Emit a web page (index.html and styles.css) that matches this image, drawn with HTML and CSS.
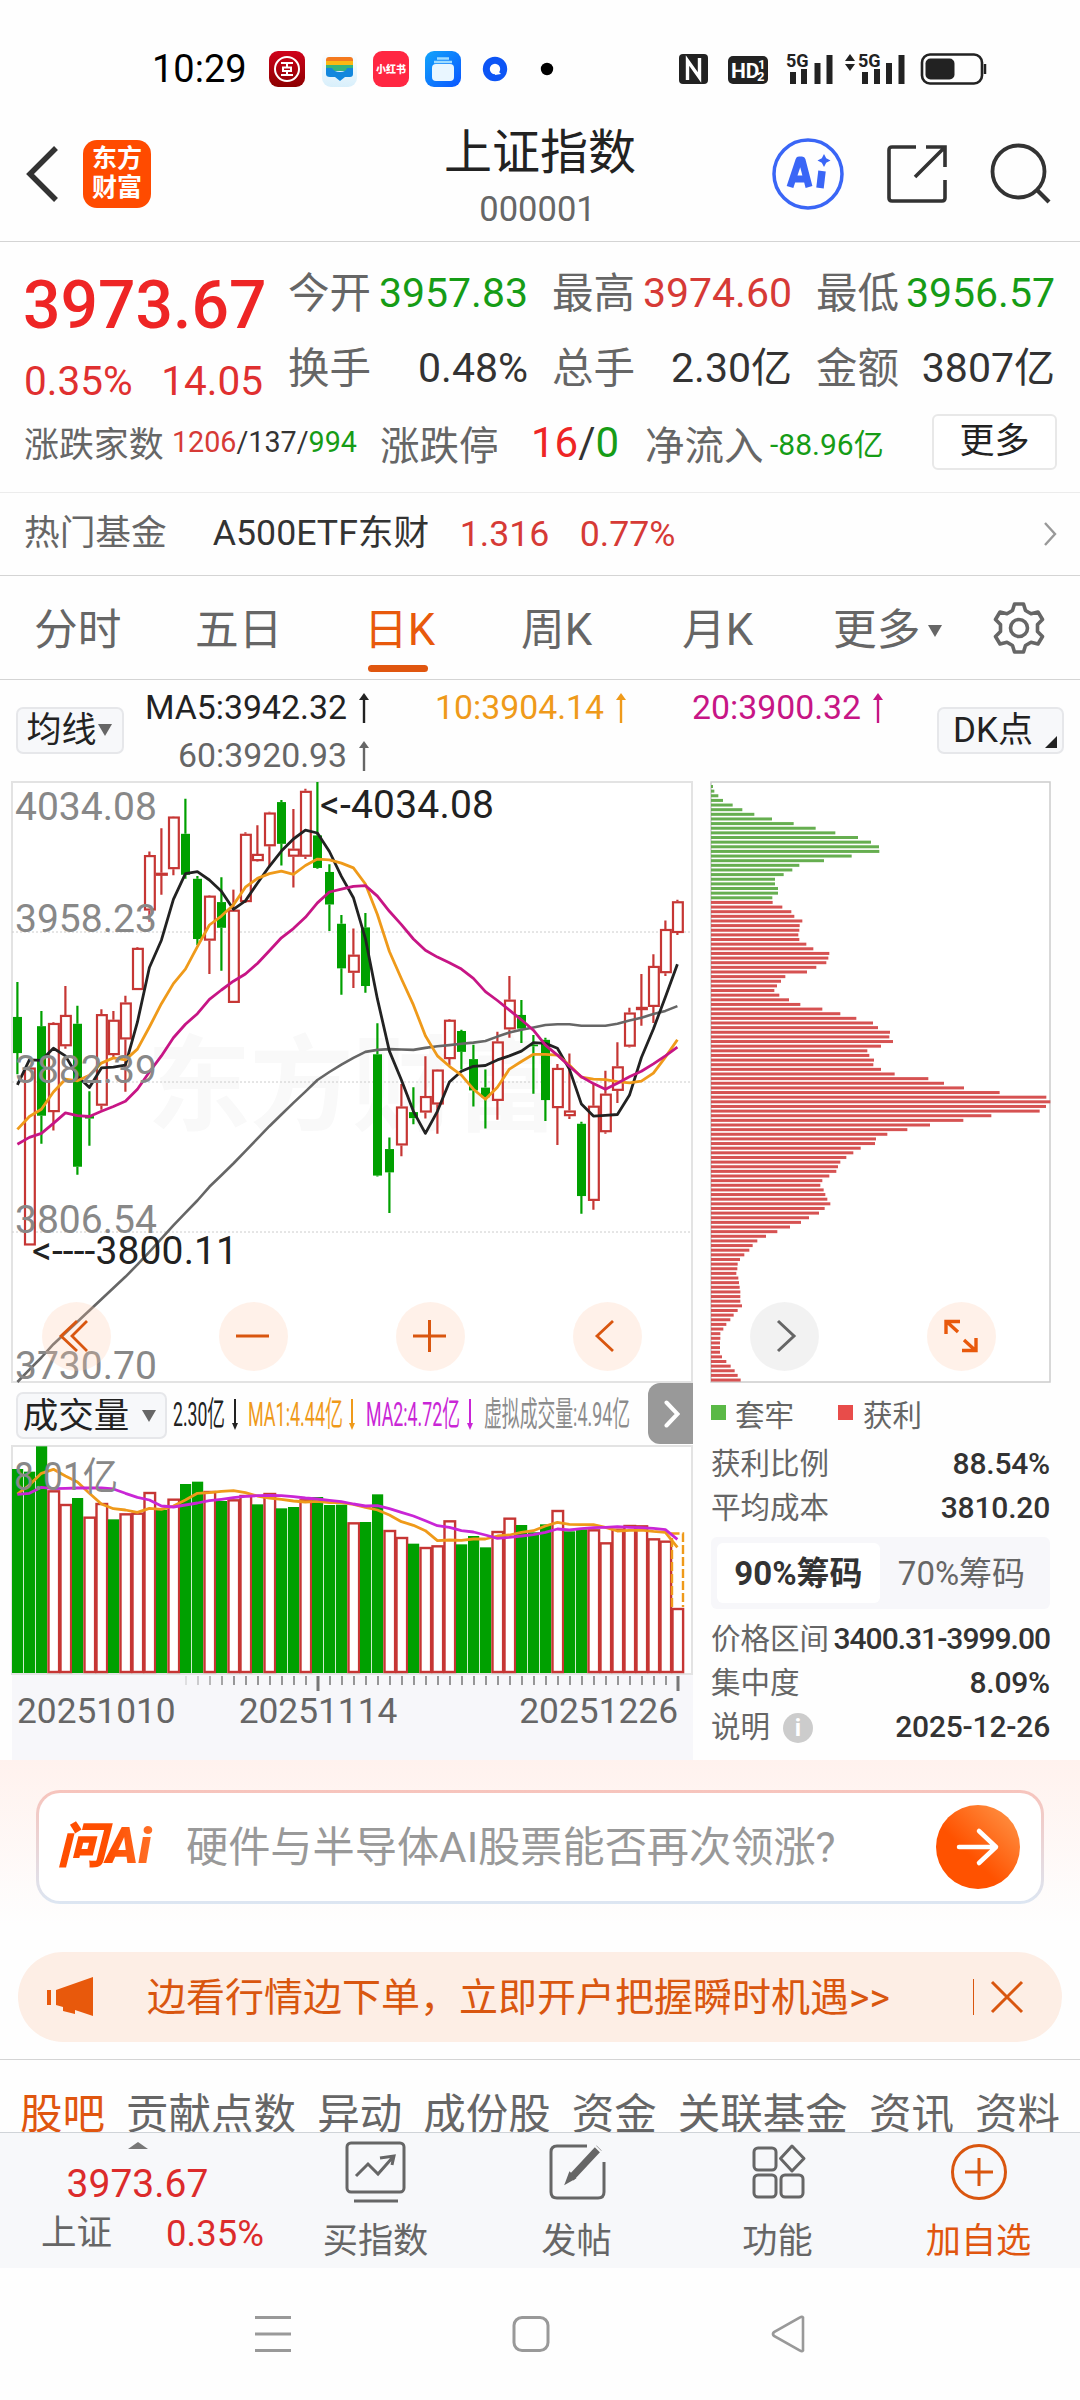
FILE: index.html
```html
<!DOCTYPE html>
<html lang="zh-CN">
<head>
    <meta charset="UTF-8">
    <meta name="viewport" content="width=device-width, initial-scale=1.0">
    <title>上证指数 000001</title>
    <link rel="stylesheet" href="styles.css">
</head>
<body>

    <div class="status-bar">
        <span class="clock">10:29</span>
        <svg class="status-apps" width="290" height="36" viewBox="0 0 290 36">
            <defs>
                <linearGradient id="bankBg" x1="0" y1="0" x2="0" y2="1"><stop offset="0" stop-color="#d0021b"/><stop offset="1" stop-color="#8c0000"/></linearGradient>
                <linearGradient id="fileBg" x1="0" y1="0" x2="1" y2="1"><stop offset="0" stop-color="#12a5fb"/><stop offset="1" stop-color="#0a55ff"/></linearGradient>
                <linearGradient id="walletBg" x1="0" y1="0" x2="0" y2="1"><stop offset="0" stop-color="#fff"/><stop offset="1" stop-color="#d8effb"/></linearGradient>
            </defs>
            <rect width="36" height="36" rx="9" fill="url(#bankBg)"/>
            <circle cx="18" cy="18" r="12" fill="none" stroke="#fff" stroke-width="2"/>
            <path d="M12 12h12M12 24h12M14 16.500h8v3.500h-8zM18 12v4M18 20v4" fill="none" stroke="#fff" stroke-width="2"/>
            <rect x="53" y="0" width="35" height="36" rx="9" fill="url(#walletBg)"/>
            <rect x="57" y="6" width="27" height="12" rx="3" fill="#f47a1f"/>
            <rect x="57" y="10" width="27" height="8" fill="#fcb813"/>
            <rect x="57" y="14" width="27" height="6" fill="#35b37e"/>
            <path d="M57 17h6q2 4 8 4t7-4h6v6q0 3-3 3h-5l-5 4-5-4h-5q-4 0-4-3z" fill="#1287dd"/>
            <rect x="104" width="36" height="36" rx="9" fill="#ff2742"/>
            <text class="xhs" x="122" y="22" text-anchor="middle">小红书</text>
            <rect x="156" width="36" height="36" rx="9" fill="url(#fileBg)"/>
            <rect x="163" y="13" width="22" height="17" rx="4" fill="#e9f6ff"/>
            <path d="M165 11h18M168 7.500h12" stroke="#9fdcff" stroke-width="2.500"/>
            <circle cx="226" cy="18" r="8.700" fill="none" stroke="#0d55f5" stroke-width="7"/>
            <path d="M227 18l5 5-6 1z" fill="#fff"/>
            <circle cx="278" cy="18" r="6.200"/>
        </svg>
        <svg class="status-signal" width="312" height="36" viewBox="0 0 312 36">
            <rect x="1" y="3" width="29" height="30" rx="4" fill="#222"/>
            <path d="M9.500 29V9.500L21.500 26.500V7" fill="none" stroke="#fff" stroke-width="3.400"/>
            <rect x="50" y="5" width="40" height="28" rx="5" fill="#222"/>
            <text class="hd" x="53" y="27">HD</text>
            <text class="hd-small" x="80" y="18">1</text>
            <text class="hd-small" x="79" y="30">2</text>
            <text class="net" x="108" y="16">5G</text>
            <path d="M115 21v12M126 18v15M139.500 12v21M151.500 4v29" stroke="#222" stroke-width="6"/>
            <path d="M167 10l5-7 5 7zM167 13l5 7 5-7z" fill="#222"/>
            <text class="net" x="180" y="16">5G</text>
            <path d="M187 21v12M199 18v15M211 12v21M223.500 4v29" stroke="#222" stroke-width="6"/>
            <rect x="244" y="3.500" width="60" height="29" rx="8" fill="none" stroke="#222" stroke-width="2.600"/>
            <rect x="247.500" y="7.500" width="29" height="21" rx="5" fill="#222"/>
            <path d="M307 13v10" stroke="#222" stroke-width="2.500"/>
        </svg>
    </div>

    <header class="top-bar">
        <svg class="back" width="40" height="60" viewBox="0 0 40 60"><path d="M34 4L8 30l26 26" fill="none" stroke="#333" stroke-width="5.500"/></svg>
        <div class="logo">东方<br>财富</div>
        <div class="title">
            <h1>上证指数</h1>
            <span>000001</span>
        </div>
        <svg class="ai" width="72" height="72" viewBox="0 0 72 72">
            <circle cx="36" cy="36" r="34" fill="none" stroke="#3a66f6" stroke-width="3.500"/>
            <path d="M18 49L27 22h3l7 27M22 41h12" fill="none" stroke="#3a66f6" stroke-width="7" stroke-linejoin="round"/>
            <path d="M50 33l-2 17" stroke="#3a66f6" stroke-width="7.500"/>
            <path d="M52 16l2.200 4.300 4.300 2.200-4.300 2.200L52 29l-2.200-4.300-4.300-2.200 4.300-2.200z" fill="#3a66f6"/>
        </svg>
        <svg class="share" width="60" height="60" viewBox="0 0 60 60"><path d="M29 3H5q-3 0-3 3v48q0 3 3 3h50q3 0 3-3V36M39 3h19v20M58 3L28 33" fill="none" stroke="#333" stroke-width="3.600"/></svg>
        <svg class="search" width="62" height="62" viewBox="0 0 62 62"><circle cx="28.500" cy="28.500" r="26" fill="none" stroke="#333" stroke-width="3.800"/><path d="M47 47l12 12" stroke="#333" stroke-width="4.200"/></svg>
    </header>

    <section class="quote">
        <div class="quote-main">
            <div class="price">
                <strong>3973.67</strong>
                <p><span>0.35%</span><span>14.05</span></p>
            </div>
            <div class="stats">
                <div><label>今开</label><b class="green">3957.83</b></div>
                <div><label>最高</label><b class="red">3974.60</b></div>
                <div><label>最低</label><b class="green">3956.57</b></div>
                <div><label>换手</label><b>0.48%</b></div>
                <div><label>总手</label><b>2.30亿</b></div>
                <div><label>金额</label><b>3807亿</b></div>
            </div>
        </div>
        <div class="quote-extra">
            <label class="updown">涨跌家数</label>
            <span class="small updown-value"><i class="red">1206</i>/137/<i class="green">994</i></span>
            <label class="limit">涨跌停</label>
            <span class="limit-value"><i class="bright">16</i>/<i class="green">0</i></span>
            <label class="inflow">净流入</label>
            <span class="small green">-88.96亿</span>
            <button class="more-btn">更多</button>
        </div>
    </section>

    <section class="fund">
        <label>热门基金</label>
        <span class="fund-name">A500ETF东财</span>
        <span class="red fund-price">1.316</span>
        <span class="red">0.77%</span>
        <svg width="14" height="26" viewBox="0 0 14 26"><path d="M2 2l10 11L2 24" fill="none" stroke="#999" stroke-width="2.400"/></svg>
    </section>

    <nav class="periods">
        <a>分时</a>
        <a>五日</a>
        <a class="active">日K</a>
        <a>周K</a>
        <a>月K</a>
        <a>更多<i class="caret"></i></a>
        <svg width="54" height="54" viewBox="0 0 54 54">
            <path d="M22.500 3h9l2 6.500 5.500 3.200 7-1.700 4.500 7.500-5 5v7l5 5-4.500 7.500-7-1.700-5.500 3.200-2 6.500h-9l-2-6.500-5.500-3.200-7 1.700-4.500-7.500 5-5v-7l-5-5L8 11l7 1.700 5.500-3.200z" fill="none" stroke="#666" stroke-width="3.600" stroke-linejoin="round"/>
            <circle cx="27" cy="27" r="8.500" fill="none" stroke="#666" stroke-width="3.600"/>
        </svg>
    </nav>

    <section class="averages">
        <button class="pill">均线<i class="caret"></i></button>
        <div class="ma-list">
            <span class="ma5">MA5:3942.32<svg class="up" width="12" height="30" viewBox="0 0 12 30"><path d="M6 4v26" stroke="currentColor" stroke-width="2.400"/><path d="M1 7l5-7 5 7z" fill="currentColor"/></svg></span>
            <span class="ma10">10:3904.14<svg class="up" width="12" height="30" viewBox="0 0 12 30"><path d="M6 4v26" stroke="currentColor" stroke-width="2.400"/><path d="M1 7l5-7 5 7z" fill="currentColor"/></svg></span>
            <span class="ma20">20:3900.32<svg class="up" width="12" height="30" viewBox="0 0 12 30"><path d="M6 4v26" stroke="currentColor" stroke-width="2.400"/><path d="M1 7l5-7 5 7z" fill="currentColor"/></svg></span>
            <span class="ma60">60:3920.93<svg class="up" width="12" height="30" viewBox="0 0 12 30"><path d="M6 4v26" stroke="currentColor" stroke-width="2.400"/><path d="M1 7l5-7 5 7z" fill="currentColor"/></svg></span>
        </div>
        <button class="pill dk">DK点<i class="corner"></i></button>
    </section>

    <main class="charts">
        <div class="left-col">
            <svg id="kline" width="682" height="602" viewBox="0 0 682 602"></svg>

            <div class="volume-head">
                <button class="pill volume-pill">成交量<i class="caret"></i></button>
                <svg class="volume-legend" width="460" height="60" viewBox="0 0 460 60">
                    <text x="0" y="43" textLength="52" lengthAdjust="spacingAndGlyphs" fill="#222">2.30亿</text>
                    <text x="75" y="43" textLength="95" lengthAdjust="spacingAndGlyphs" fill="#ef9a1a">MA1:4.44亿</text>
                    <text x="193" y="43" textLength="94" lengthAdjust="spacingAndGlyphs" fill="#c926d6">MA2:4.72亿</text>
                    <text x="311" y="43" textLength="146" lengthAdjust="spacingAndGlyphs" fill="#8c8c8c">虚拟成交量:4.94亿</text>
                    <path d="M62 16v26" stroke="#222" stroke-width="2"/><path d="M59 40h6l-3 7z" fill="#222"/>
                    <path d="M179 16v26" stroke="#ef9a1a" stroke-width="2"/><path d="M176 40h6l-3 7z" fill="#ef9a1a"/>
                    <path d="M297 16v26" stroke="#c926d6" stroke-width="2"/><path d="M294 40h6l-3 7z" fill="#c926d6"/>
                </svg>
                <div class="next"><svg width="16" height="28" viewBox="0 0 16 28"><path d="M2.500 2.500l11 11.500-11 11.500" fill="none" stroke="#fff" stroke-width="4" stroke-linecap="round"/></svg></div>
            </div>

            <svg id="volume" width="682" height="230" viewBox="0 0 682 230"></svg>

            <div class="dates">
                <svg id="ticks" width="680" height="18" viewBox="0 0 680 18"></svg>
                <div class="date-row"><span>20251010</span><span>20251114</span><span>20251226</span></div>
            </div>
        </div>

        <div class="right-col">
            <svg id="chips" width="341" height="602" viewBox="0 0 341 602"></svg>
            <div class="chip-legend"><i class="sq sq-green"></i>套牢<i class="sq sq-red"></i>获利</div>
            <div class="row"><label>获利比例</label><b>88.54%</b></div>
            <div class="row"><label>平均成本</label><b>3810.20</b></div>
            <div class="switch"><span class="on">90%筹码</span><span>70%筹码</span></div>
            <div class="row"><label>价格区间</label><b class="range">3400.31-3999.00</b></div>
            <div class="row"><label>集中度</label><b>8.09%</b></div>
            <div class="row"><label>说明<i class="info">i</i></label><b>2025-12-26</b></div>
        </div>

        <div class="tools">
            <span><svg width="44" height="44" viewBox="0 0 44 44"><path d="M23 7L7 22l16 15M33 7L18 22l15 15" fill="none" stroke="#d9560f" stroke-width="2.800"/></svg></span>
            <span><svg width="44" height="44" viewBox="0 0 44 44"><path d="M5 22h33" stroke="#d9560f" stroke-width="3"/></svg></span>
            <span><svg width="44" height="44" viewBox="0 0 44 44"><path d="M5 22h33M21.500 6v32" stroke="#d9560f" stroke-width="3"/></svg></span>
            <span><svg width="44" height="44" viewBox="0 0 44 44"><path d="M28 7L12 22l16 15" fill="none" stroke="#d9560f" stroke-width="2.800"/></svg></span>
            <span class="gray"><svg width="44" height="44" viewBox="0 0 44 44"><path d="M16 7l16 15-16 15" fill="none" stroke="#666" stroke-width="3"/></svg></span>
            <span><svg width="44" height="44" viewBox="0 0 44 44"><path d="M7 20V7.500h14M7 7l12 11M37 24v12.500H23M37 37L25 26" fill="none" stroke="#e8590c" stroke-width="3.400"/></svg></span>
        </div>
    </main>

    <section class="ask">
        <div class="ask-box">
            <span class="ask-logo">问Ai</span>
            <span class="ask-text">硬件与半导体AI股票能否再次领涨?</span>
            <span class="go"><svg width="44" height="40" viewBox="0 0 44 40"><path d="M3 20h37M23 4l17 16-17 16" fill="none" stroke="#fff" stroke-width="4.500" stroke-linecap="round" stroke-linejoin="round"/></svg></span>
        </div>
    </section>

    <div class="banner">
        <svg width="48" height="42" viewBox="0 0 48 42"><path d="M2 14v15" stroke="#e8590c" stroke-width="4"/><path d="M9 14L46 1v39L28 34v4l-12-3v-4L9 29z" fill="#e8590c"/></svg>
        <span>边看行情边下单，立即开户把握瞬时机遇&gt;&gt;</span>
        <i></i>
        <svg width="34" height="34" viewBox="0 0 34 34"><path d="M2 2l30 30M32 2L2 32" stroke="#d9560f" stroke-width="3"/></svg>
    </div>

    <nav class="topics">
        <a class="active">股吧</a><a>贡献点数</a><a>异动</a><a>成份股</a><a>资金</a><a>关联基金</a><a>资讯</a><a>资料</a>
    </nav>

    <footer class="bottom-bar">
        <div class="index">
            <i></i>
            <b>3973.67</b>
            <p><span>上证</span><em>0.35%</em></p>
        </div>
        <div class="action">
            <svg width="64" height="64" viewBox="0 0 64 64" fill="none" stroke="#666" stroke-width="3"><rect x="3" y="3" width="57" height="49" rx="4"/><path d="M12 36l12-12 10 10 15-17M36 18l14-2-2 9M10 61h44" /></svg>
            <span>买指数</span>
        </div>
        <div class="action">
            <svg width="64" height="64" viewBox="0 0 64 64" fill="none" stroke="#666" stroke-width="3"><path d="M42 6H12q-6 0-6 6v40q0 6 6 6h41q6 0 6-6V22"/><path d="M26 38L54 8" stroke-width="7"/><path d="M22 42l3-8 4 4z" fill="#666"/><path d="M50 6l7 7" stroke="#f7f8fa" stroke-width="2"/></svg>
            <span>发帖</span>
        </div>
        <div class="action">
            <svg width="64" height="64" viewBox="0 0 64 64" fill="none" stroke="#666" stroke-width="3"><rect x="8" y="8" width="22" height="22" rx="4"/><rect x="8" y="35" width="22" height="22" rx="4"/><rect x="35" y="35" width="22" height="22" rx="4"/><path d="M46 6l12 12.500L46 31 34.500 18.500z" stroke-linejoin="round"/></svg>
            <span>功能</span>
        </div>
        <div class="action add">
            <svg width="64" height="64" viewBox="0 0 64 64" fill="none" stroke="#d9560f" stroke-width="3"><circle cx="32" cy="32" r="26.500"/><path d="M18 32h28M32 18v28"/></svg>
            <span>加自选</span>
        </div>
    </footer>

    <div class="system-nav">
        <svg width="38" height="40" viewBox="0 0 38 40"><path d="M1 3.500h36M1 20h36M1 36.500h36" stroke="#999" stroke-width="3"/></svg>
        <svg width="38" height="40" viewBox="0 0 38 40"><rect x="2" y="3.500" width="34" height="33" rx="8" fill="none" stroke="#999" stroke-width="3"/></svg>
        <svg width="38" height="40" viewBox="0 0 38 40"><path d="M33 3.500v33q-1 1.500-3 0L4 22q-2-2 0-4L30 3.500q2-1.500 3 0z" fill="none" stroke="#999" stroke-width="2.600"/></svg>
    </div>

    <script src="script.js"></script>
</body>
</html>
```
FILE: styles.css
```css
* {
    box-sizing: border-box;
}

body {
    margin: 0;
    width: 1080px;
    height: 2400px;
    overflow: hidden;
    background-color: #fefefe;
    color: #333;
    font-family: Roboto, "Noto Sans CJK SC", sans-serif;
}

svg {
    display: block;
    flex: none;
}

i, em {
    font-style: normal;
}

b {
    font-weight: 400;
}

p, h1 {
    margin: 0;
    font-weight: 400;
}

button {
    font-family: inherit;
    color: #222;
    padding: 0;
}

.red { color: #d63a36; }
.green { color: #169c16; }
.bright { color: #ee2525; }

/* status bar */
.status-bar {
    height: 104px;
    padding-top: 33px;
    display: flex;
    align-items: center;
    color: #000;
}

.clock {
    width: 117px;
    margin-left: 152px;
    font-size: 38px;
}

.status-signal {
    margin-left: 119px;
}

.xhs {
    font-size: 10px;
    font-weight: 900;
    fill: #fff;
}

.hd {
    font-size: 21px;
    font-weight: 700;
    fill: #fff;
}

.hd-small {
    font-size: 13px;
    font-weight: 700;
    fill: #fff;
}

.net {
    font-size: 18px;
    font-weight: 700;
    fill: #222;
}

/* header */
.top-bar {
    height: 138px;
    border-bottom: 1px solid #d4d4d4;
    display: flex;
    align-items: center;
    padding-top: 3px;
}

.back {
    margin-left: 22px;
}

.logo {
    width: 68px;
    height: 68px;
    margin-left: 21px;
    padding-top: 4px;
    border-radius: 14px;
    background-color: #ff4b00;
    color: #fff;
    font-size: 25px;
    font-weight: 700;
    line-height: 29px;
    text-align: center;
}

.title {
    width: 240px;
    margin-left: 269px;
    text-align: center;
}

.title h1 {
    height: 56px;
    color: #222;
    font-size: 48px;
    line-height: 62px;
}

.title span {
    display: block;
    height: 48px;
    margin-left: -5px;
    font-size: 34.500px;
    line-height: 62px;
    color: #666;
}

.ai {
    margin-left: 112px;
}

.share {
    margin-left: 43px;
}

.search {
    margin-left: 43px;
}

/* quote */
.quote {
    height: 251px;
    border-bottom: 1px solid #ececec;
}

.quote-main {
    display: flex;
    height: 164px;
    padding: 14px 24px 0 25px;
}

.price {
    width: 263px;
    color: #ee2525;
}

.price strong {
    display: block;
    margin-left: -2px;
    font-size: 66px;
    font-weight: 500;
    line-height: 99px;
}

.price p {
    display: flex;
    justify-content: space-between;
    width: 239px;
    margin-left: -1px;
    color: #e03030;
    font-size: 40.500px;
    line-height: 52px;
}

.stats {
    display: grid;
    grid-template-columns: 240px 240px 239px;
    grid-auto-rows: 75px;
    column-gap: 24px;
}

.stats div {
    display: flex;
    justify-content: space-between;
    font-size: 41.500px;
    line-height: 75px;
}

.stats b {
    font-size: 41px;
}

label {
    color: #666;
}

.quote-extra {
    display: flex;
    align-items: center;
    height: 72px;
    padding: 0 23px 0 24px;
    font-size: 39.500px;
    white-space: nowrap;
}

.quote-extra .small {
    font-size: 28.700px;
}

.quote-extra .updown {
    width: 148px;
    font-size: 34.900px;
}

.updown-value {
    width: 208px;
}

.quote-extra .limit {
    width: 151px;
}

.limit-value {
    width: 114px;
    font-size: 42px;
}

.quote-extra .inflow {
    width: 125px;
}

.quote-extra .small.green {
    font-size: 30px;
}

.more-btn {
    width: 125px;
    height: 56px;
    margin: -1px 0 0 auto;
    border: 2px solid #e8e8e8;
    border-radius: 6px;
    background-color: #fff;
    font-size: 35px;
    line-height: 50px;
}

/* fund */
.fund {
    height: 83px;
    border-bottom: 1px solid #d4d4d4;
    padding: 0 23px 0 24px;
    display: flex;
    align-items: center;
    font-size: 35.700px;
    line-height: 80px;
}

.fund label,
.fund-name {
    height: 83px;
    line-height: 80px;
}

.fund-name {
    width: 247px;
    margin-left: 46px;
}

.fund-price {
    width: 120px;
}

.fund svg {
    margin-left: auto;
}

/* period tabs */
.periods {
    height: 104px;
    border-bottom: 1px solid #d4d4d4;
    padding: 0 34px;
    display: grid;
    grid-template-columns: 161px 169px 157px 161px 151px 159px 54px;
    align-items: center;
    color: #666;
    font-size: 43.700px;
}

.periods a {
    height: 103px;
    line-height: 109px;
    white-space: nowrap;
}

.periods .active {
    position: relative;
    color: #e8590c;
}

.periods .active::after {
    content: "";
    position: absolute;
    left: 4px;
    bottom: 7px;
    width: 60px;
    height: 7px;
    border-radius: 4px;
    background-color: #e0560f;
}

.caret {
    display: inline-block;
    margin-left: 8px;
    border: 7px solid transparent;
    border-top: 12px solid #666;
    border-bottom: 0;
    vertical-align: 8px;
}

/* moving averages */
.averages {
    display: flex;
    height: 101px;
    padding: 0 16px;
}

.pill {
    width: 108px;
    height: 47px;
    margin-top: 27px;
    border: 2px solid #e6e7ea;
    border-radius: 7px;
    background-color: #f7f8fa;
    font-size: 35px;
    line-height: 42px;
    white-space: nowrap;
}

.pill .caret {
    margin-left: 1px;
    vertical-align: 6px;
}

.averages .pill:first-child {
    padding-right: 2px;
}

.dk {
    position: relative;
    width: 127px;
    padding-right: 15px;
}

.corner {
    position: absolute;
    right: 5px;
    bottom: 4px;
    border-left: 12px solid transparent;
    border-bottom: 12px solid #222;
}

.ma-list {
    width: 792px;
    margin-left: 21px;
    display: grid;
    grid-template-columns: 290px 257px 240px;
    grid-template-rows: 48px 48px;
    padding-top: 4px;
    font-size: 33.800px;
    line-height: 48px;
}

.ma-list span {
    display: flex;
    align-items: center;
}

.up {
    margin-left: 11px;
}

.ma5 { color: #222; }
.ma10 { color: #ef9a1a; }
.ma20 { color: #c71585; }
.ma60 { color: #666; padding-left: 33px; }

/* charts */
.charts {
    position: relative;
    display: flex;
    height: 979px;
    padding-left: 11px;
}

.left-col {
    width: 699px;
}

.right-col {
    width: 341px;
}

.axis {
    font-size: 39px;
    fill: #888;
}

.mark {
    font-size: 39px;
    fill: #222;
}

.watermark {
    font-size: 104px;
    font-weight: 700;
    fill: #f9f9f9;
}

.volume-head {
    display: flex;
    width: 682px;
    height: 62px;
}

.volume-pill {
    width: 151px;
    margin: 9px 0 0 5px;
    padding-right: 4px;
    font-size: 35.500px;
}

.volume-pill .caret {
    margin-left: 13px;
}

.volume-legend {
    margin-left: 6px;
    font-size: 34px;
}

.next {
    width: 45px;
    height: 61px;
    margin: 0 0 0 auto;
    padding: 17px 0 0 16px;
    border-radius: 12px 0 0 12px;
    background-color: #999;
}

.dates {
    width: 681px;
    height: 85px;
    margin-left: 1px;
    background-color: #f7f7fa;
}

.date-row {
    display: flex;
    justify-content: space-between;
    padding: 0 15px 0 5px;
    color: #666;
    font-size: 35.300px;
    line-height: 37px;
}

.date-row span:nth-child(2) {
    margin-right: 59px;
}

.chip-legend {
    display: flex;
    align-items: center;
    height: 59px;
    color: #666;
    font-size: 29.500px;
}

.sq {
    width: 15px;
    height: 15px;
    margin: 0 9px 0 1px;
}

.sq-green {
    background-color: #5ab946;
}

.sq-red {
    margin: 0 10px 0 44px;
    background-color: #e84c4a;
}

.row {
    display: flex;
    justify-content: space-between;
    align-items: center;
    height: 44px;
    padding: 0 1px;
    font-size: 29.500px;
    line-height: 44px;
    white-space: nowrap;
}

.row b {
    font-weight: 500;
    font-size: 30px;
    letter-spacing: -0.2px;
}

.row .range {
    letter-spacing: -1px;
}

.switch {
    display: flex;
    height: 72px;
    margin: 7px 1px 8px;
    padding: 6px;
    border-radius: 6px;
    background-color: #f7f7fa;
    color: #666;
    font-size: 33px;
    line-height: 61px;
    text-align: center;
}

.switch span {
    width: 163px;
}

.switch .on {
    border-radius: 6px;
    background-color: #fff;
    color: #333;
    font-weight: 700;
}

.info {
    display: inline-block;
    width: 30px;
    height: 30px;
    margin-left: 13px;
    border-radius: 50%;
    background-color: #ccc;
    color: #fff;
    font-size: 24px;
    font-weight: 700;
    line-height: 30px;
    text-align: center;
    vertical-align: 1px;
}

/* round buttons lying over both charts */
.tools {
    position: absolute;
    left: 42px;
    top: 521px;
    display: flex;
    gap: 108px;
}

.tools span {
    width: 69px;
    height: 69px;
    padding: 12px;
    border-radius: 50%;
    background-color: rgba(255, 200, 170, 0.26);
}

.tools .gray {
    background-color: rgba(0, 0, 0, 0.05);
}

/* ask box */
.ask {
    height: 165px;
    padding: 30px 36px 0;
    background: linear-gradient(#fff2ee, #fefefe);
}

.ask-box {
    display: flex;
    align-items: center;
    height: 114px;
    padding: 0 21px 0 18px;
    border: 3px solid transparent;
    border-radius: 24px;
    background: linear-gradient(#fff, #fff) padding-box, linear-gradient(#f7c4bc, #dce6f2) border-box;
}

.ask-logo {
    width: 129px;
    background: linear-gradient(90deg, #ff4e00 40%, #ff8a45);
    -webkit-background-clip: text;
    background-clip: text;
    color: transparent;
    font-size: 49px;
    font-style: italic;
    font-weight: 900;
    line-height: 70px;
    white-space: nowrap;
}

.ask-text {
    color: #999;
    font-size: 42.200px;
    line-height: 60px;
    margin-top: 2px;
}

.go {
    width: 84px;
    height: 84px;
    margin-left: auto;
    padding: 22px 20px;
    border-radius: 50%;
    background: linear-gradient(45deg, #ff5200 40%, #ff9a4d);
}

/* banner */
.banner {
    display: flex;
    align-items: center;
    height: 90px;
    margin: 27px 18px 17px;
    padding: 0 38px 0 29px;
    border-radius: 45px;
    background-color: #fdeee5;
    color: #d9560f;
    font-size: 39px;
}

.banner span {
    margin: -6px 0 0 52px;
    white-space: nowrap;
}

.banner i {
    width: 1px;
    height: 36px;
    margin: 0 16px 0 auto;
    background-color: #d9560f;
}

.topics {
    display: flex;
    justify-content: space-between;
    height: 73px;
    padding: 0 20px;
    border-top: 1px solid #d4d4d4;
    overflow: hidden;
    color: #666;
    font-size: 42.500px;
    line-height: 109px;
    white-space: nowrap;
}

.topics .active {
    color: #e0560f;
}

/* bottom bar */
.bottom-bar {
    display: flex;
    height: 136px;
    border-top: 1px solid #d0d4d8;
    background-color: #f7f8fa;
}

.index {
    width: 275px;
    text-align: center;
}

.index i {
    display: block;
    width: 0;
    margin: 9px 0 0 128px;
    border: 10px solid transparent;
    border-bottom: 7px solid #777;
    border-top: 0;
}

.index b {
    display: block;
    color: #dc2b2b;
    font-size: 39px;
    line-height: 50px;
    margin-top: 10px;
}

.index p {
    display: flex;
    justify-content: space-between;
    padding: 0 11px 0 41px;
    color: #666;
    font-size: 35.500px;
    line-height: 49px;
}

.index em {
    color: #dc2b2b;
    font-size: 36.500px;
}

.action {
    width: 201px;
    display: flex;
    flex-direction: column;
    align-items: center;
    padding-top: 7px;
    color: #666;
    font-size: 35.200px;
    line-height: 75px;
}

.add {
    color: #e0560f;
}

.system-nav {
    display: flex;
    gap: 220px;
    padding: 46px 0 0 254px;
}
```
FILE: script.js
```js
const GREEN = '#00a000';
const RED = '#c63634';
const STEP = 12;

// [color, high, body top, body bottom, low], 30 is the top of the chart and 1524 the bottom
const candles = [
    ['g', 528, 615, 705, 758], ['r', 741, 741, 1184, 1184], ['g', 600, 638, 861, 931], ['r', 628, 630, 852, 898],
    ['r', 538, 610, 688, 694], ['g', 587, 632, 988, 1008], ['g', 800, 862, 868, 936], ['r', 596, 608, 836, 846],
    ['r', 600, 622, 710, 715], ['r', 562, 579, 671, 801], ['r', 441, 443, 548, 548], ['r', 203, 212, 350, 378],
    ['r', 145, 256, 262, 311], ['r', 115, 116, 247, 262], ['g', 72, 159, 261, 271], ['g', 264, 271, 421, 436],
    ['r', 312, 313, 425, 508], ['g', 267, 329, 393, 500], ['r', 298, 348, 580, 580], ['r', 155, 159, 329, 331],
    ['r', 138, 209, 227, 228], ['r', 104, 106, 190, 242], ['g', 75, 80, 184, 238], ['r', 97, 196, 216, 293],
    ['r', 47, 52, 216, 222], ['g', 30, 163, 244, 246], ['g', 235, 254, 335, 401], ['g', 361, 383, 494, 560],
    ['r', 395, 460, 505, 543], ['g', 356, 392, 538, 555], ['g', 631, 708, 1010, 1012], ['g', 915, 944, 1002, 1103],
    ['r', 782, 838, 935, 962], ['g', 790, 852, 867, 882], ['r', 713, 812, 853, 868], ['r', 745, 746, 833, 906],
    ['r', 620, 622, 720, 736], ['g', 647, 650, 702, 746], ['g', 684, 720, 798, 838], ['g', 746, 791, 815, 893],
    ['r', 652, 676, 824, 871], ['r', 513, 572, 646, 667], ['g', 573, 610, 644, 680], ['g', 660, 684, 688, 806],
    ['g', 667, 672, 822, 874], ['r', 732, 742, 842, 934], ['r', 706, 848, 862, 869], ['g', 876, 881, 1061, 1105],
    ['r', 781, 836, 1073, 1095], ['r', 749, 806, 902, 906], ['r', 678, 738, 799, 829], ['r', 592, 604, 689, 691],
    ['r', 508, 590, 598, 637], ['r', 459, 488, 590, 630], ['r', 375, 396, 506, 513], ['r', 323, 327, 406, 411]
];

const ma5 = [784, 722, 723, 693, 712, 762, 791, 742, 740, 735, 628, 492, 424, 322, 258, 253, 274, 302, 347, 326, 282, 240, 202, 172, 150, 157, 203, 265, 318, 420, 570, 700, 772, 850, 905, 850, 777, 750, 738, 736, 722, 712, 700, 679, 681, 693, 745, 832, 862, 860, 858, 810, 716, 645, 565, 484];
const ma10 = [895, 863, 845, 802, 770, 774, 760, 730, 717, 722, 695, 640, 582, 532, 496, 440, 386, 364, 336, 292, 270, 258, 252, 260, 238, 222, 224, 232, 244, 284, 360, 452, 520, 585, 662, 712, 738, 760, 795, 820, 790, 745, 726, 708, 708, 710, 735, 765, 770, 771, 776, 779, 775, 755, 715, 672];
const ma20 = [932, 915, 905, 880, 854, 861, 863, 850, 838, 825, 795, 752, 712, 667, 633, 607, 571, 548, 526, 508, 482, 450, 418, 395, 367, 331, 304, 297, 290, 288, 314, 352, 385, 421, 449, 466, 480, 496, 519, 552, 574, 598, 622, 648, 685, 710, 738, 764, 781, 795, 780, 764, 750, 732, 712, 690];
const ma60 = [1524, 1493, 1463, 1430, 1402, 1374, 1346, 1318, 1290, 1262, 1232, 1200, 1167, 1134, 1103, 1072, 1038, 1009, 980, 949, 918, 887, 858, 829, 801, 772, 752, 734, 717, 702, 697, 695, 696, 697, 692, 688, 685, 682, 679, 675, 664, 654, 647, 641, 635, 633, 633, 637, 637, 637, 632, 624, 617, 608, 600, 588];

// bar tops, 228 is the top of the volume chart and 912 the bottom
const volumes = [
    ['g', 297], ['g', 305], ['g', 229], ['r', 361], ['r', 402], ['g', 384], ['r', 440], ['r', 399], ['g', 448], ['r', 430],
    ['r', 428], ['r', 366], ['g', 419], ['r', 386], ['g', 342], ['g', 335], ['r', 363], ['g', 393], ['r', 388], ['r', 375],
    ['g', 403], ['r', 369], ['g', 415], ['g', 411], ['r', 388], ['g', 381], ['g', 405], ['g', 404], ['r', 457], ['g', 456],
    ['g', 373], ['r', 480], ['r', 501], ['g', 521], ['r', 531], ['r', 526], ['r', 451], ['g', 523], ['g', 498], ['g', 532],
    ['r', 483], ['r', 443], ['g', 465], ['g', 487], ['g', 463], ['r', 420], ['g', 484], ['g', 478], ['r', 478], ['r', 517],
    ['r', 476], ['r', 465], ['r', 466], ['r', 505], ['r', 512], ['r', 714]
];
const volMa1 = [372, 345, 310, 298, 318, 336, 370, 402, 416, 420, 427, 415, 418, 408, 390, 370, 368, 364, 362, 368, 378, 384, 388, 393, 396, 394, 398, 398, 403, 412, 420, 435, 455, 466, 482, 512, 510, 511, 507, 507, 498, 495, 487, 482, 468, 457, 463, 464, 464, 472, 483, 481, 480, 484, 487, 532];
const volMa2 = [373, 370, 352, 356, 355, 354, 354, 354, 357, 370, 382, 390, 408, 411, 405, 399, 392, 388, 383, 379, 377, 376, 377, 380, 384, 387, 391, 395, 402, 408, 407, 416, 427, 438, 452, 467, 472, 482, 486, 495, 505, 502, 498, 494, 487, 477, 480, 476, 473, 472, 470, 472, 473, 475, 479, 508];

const trapped = [6, 10, 22, 36, 65, 94, 130, 183, 248, 314, 373, 441, 480, 504, 505, 422, 339, 265, 244, 218, 192, 192, 201, 201, 184];
const profit = [
    185, 214, 241, 250, 274, 266, 265, 262, 265, 286, 307, 355, 352, 346, 316, 288, 223, 210, 198, 190, 205, 234, 268, 334, 388,
    436, 486, 501, 537, 535, 546, 510, 469, 475, 489, 487, 510, 551, 652, 699, 759, 866, 1006, 1018, 1005, 986, 841, 757, 657, 589,
    529, 495, 492, 449, 427, 406, 388, 381, 376, 355, 334, 328, 338, 343, 349, 358, 341, 324, 294, 270, 237, 199, 165, 139, 125,
    115, 100, 87, 80, 79, 76, 82, 84, 86, 88, 88, 88, 93, 80, 68, 58, 46, 37, 28, 28, 27, 27, 27, 33, 46, 59, 71, 80, 89
];

const rect = (x, y, w, h, attrs) => `<rect x="${x}" y="${y}" width="${w}" height="${h}" ${attrs}/>`;
const label = (x, y, text, cls) => `<text x="${x}" y="${y}" class="${cls}">${text}</text>`;

function curve(values, toY, color, left, width) {
    const points = values.map((v, i) => `${left + i * STEP},${toY(v).toFixed(1)}`).join(' ');
    return `<polyline points="${points}" fill="none" stroke="${color}" stroke-width="${width}" stroke-linejoin="round"/>`;
}

function drawKline() {
    const toY = v => (v - 30) / 2.49 + 1;
    let out = rect(1, 1, 680, 600, 'fill="#fff" stroke="#e3e3e3" stroke-width="2"');
    out += '<text class="watermark" x="136" y="342" textLength="412">东方财富</text>';
    [151, 301, 451].forEach(y => {
        out += `<path d="M1 ${y}h680" stroke="#ccc" stroke-dasharray="2 2"/>`;
    });
    candles.forEach(([type, high, top, bottom, low], i) => {
        const x = 6.4 + i * STEP;
        const color = type === 'g' ? GREEN : RED;
        const h = Math.max(toY(bottom) - toY(top), 1.5);
        out += `<path d="M${x} ${toY(high)}V${toY(top)}M${x} ${toY(bottom)}V${toY(low)}" stroke="${color}" stroke-width="2.2"/>`;
        if (type === 'g') {
            out += rect(x - 4.4, toY(top), 9, h, `fill="${color}"`);
        } else {
            out += rect(x - 4.4, toY(top) + 1, 9.8, Math.max(h - 2, 1), `fill="#fff" stroke="${color}" stroke-width="2.2"`);
        }
    });
    out += curve(ma60, toY, '#666', 6.4, 2.6);
    out += curve(ma5, toY, '#222', 6.4, 2.8);
    out += curve(ma10, toY, '#ef9a1a', 6.4, 2.8);
    out += curve(ma20, toY, '#c71585', 6.4, 2.8);
    out += label(4, 39, '4034.08', 'axis') + label(4, 151, '3958.23', 'axis') + label(4, 302, '3882.39', 'axis');
    out += label(4, 452, '3806.54', 'axis') + label(4, 598, '3730.70', 'axis');
    out += '<text x="309" y="37" class="mark" textLength="174">&lt;-4034.08</text>';
    out += '<text x="21" y="483" class="mark" textLength="206">&lt;----3800.11</text>';
    document.getElementById('kline').innerHTML = out;
}

function drawVolume() {
    const toY = v => (v - 228) / 3 + 1;
    let out = rect(1, 1, 680, 228, 'fill="#fff" stroke="#e3e3e3" stroke-width="2"');
    volumes.forEach(([type, top], i) => {
        const x = 1 + i * STEP;
        if (type === 'g') {
            out += rect(x, toY(top), 11.2, 228 - toY(top), `fill="${GREEN}"`);
        } else {
            out += rect(x + 0.5, toY(top) + 1, 10.6, 226 - toY(top), `fill="#fff" stroke="${RED}" stroke-width="2.4"`);
        }
    });
    out += '<path d="M661 162V88.500h11V162" fill="none" stroke="#ef9a1a" stroke-width="2.4" stroke-dasharray="9 3"/>';
    out += curve(volMa1, toY, '#ef9a1a', 6.4, 2.8);
    out += curve(volMa2, toY, '#c926d6', 6.4, 2.8);
    out += '<text x="3" y="45" class="axis" textLength="104" lengthAdjust="spacingAndGlyphs">8.01亿</text>';
    document.getElementById('volume').innerHTML = out;
}

function drawTicks() {
    let out = '';
    for (let i = 14; i <= 55; i++) {
        const big = i === 25 || i === 55;
        const opacity = Math.min(1, 0.25 + (i - 14) * 0.2);
        out += `<path d="M${6 + i * STEP} 1v${big ? 15 : 9}" stroke="#777" stroke-width="${big ? 3 : 1.5}" opacity="${opacity}"/>`;
    }
    document.getElementById('ticks').innerHTML = out;
}

function drawChips() {
    let out = rect(1, 1, 339, 600, 'fill="#fff" stroke="#ccc" stroke-width="1.5"');
    trapped.concat(profit).forEach((v, i) => {
        const color = i < trapped.length ? '#66ae50' : '#d65252';
        out += rect(1, 4 + i * 4.637, v / 3, 3, `fill="${color}"`);
    });
    document.getElementById('chips').innerHTML = out;
}

drawKline();
drawVolume();
drawTicks();
drawChips();
```
